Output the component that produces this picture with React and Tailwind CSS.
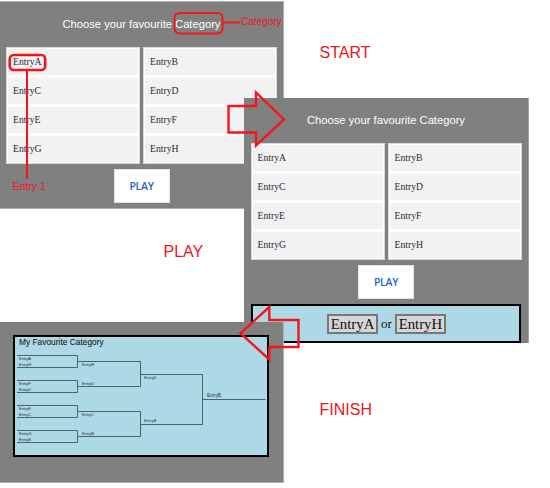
const LEFT = ['EntryA', 'EntryC', 'EntryE', 'EntryG'];
const RIGHT = ['EntryB', 'EntryD', 'EntryF', 'EntryH'];

function Column({ entries }) {
  return (
    <div className="flex h-[117px] w-[134px] flex-col gap-[3px] border border-[#d9d9d9] bg-white p-px">
      {entries.map((name) => (
        <div
          key={name}
          className="flex h-[26px] items-center bg-[#f2f2f2] pl-[5px] font-['Liberation_Serif',serif] text-[9.7px] leading-[12px] text-[#1c2b38]"
        >
          {name}
        </div>
      ))}
    </div>
  );
}

function Chooser() {
  return (
    <div className="flex flex-col items-center">
      <h1 className="h-[45px] pt-[15px] text-[11.2px] leading-[14px] text-white">
        Choose your favourite Category
      </h1>
      <div className="flex gap-[3px]">
        <Column entries={LEFT} />
        <Column entries={RIGHT} />
      </div>
      <button className="mt-[5px] h-[34px] w-[56px] border border-[#e4e4e4] bg-white font-['Open_Sans',sans-serif] text-[10.5px] font-semibold leading-[14px] tracking-[-0.3px] text-[#1f66bd]">
        PLAY
      </button>
    </div>
  );
}

function Choice({ children }) {
  return (
    <button className="h-[20px] w-[51px] border-2 border-[#777] bg-[#d6d6d6] text-[14.8px] leading-[14px] text-[#111]">
      {children}
    </button>
  );
}

const FIRST = [
  ['EntryA', 'EntryH'],
  ['EntryF', 'EntryD'],
  ['EntryE', 'EntryC'],
  ['EntryG', 'EntryB'],
];

function Bracket() {
  return (
    <svg viewBox="15 349 252 106" className="block h-[106px] w-[252px]" fontFamily="Liberation Sans, sans-serif" fontSize="4" fill="#1d3038">
      <g fill="none" stroke="#4b646d" strokeWidth="1">
        {[355.5, 380.5, 405.5, 430.5].map((y) => (
          <path key={y} d={`M17 ${y}H77.5V${y + 12}H17M77.5 ${y + 6}H140.5`} />
        ))}
        <path d="M140.5 361V386.5M140.5 411V437M140.5 374.5H203M140.5 424.5H203M202.5 374V425M203 399.5H265.5" />
      </g>
      {FIRST.map(([a, b], i) => (
        <g key={a}>
          <text x="19" y={359.7 + i * 25}>{a}</text>
          <text x="19" y={365.8 + i * 25}>{b}</text>
        </g>
      ))}
      <text x="82" y="366">EntryH</text>
      <text x="82" y="385">EntryD</text>
      <text x="82" y="416">EntryC</text>
      <text x="82" y="435">EntryB</text>
      <text x="144.3" y="378.5">EntryD</text>
      <text x="144.3" y="422.3">EntryB</text>
      <text x="207" y="397" fontSize="4.6">EntryB</text>
    </svg>
  );
}

function Note({ className, children }) {
  return <span className={`absolute whitespace-nowrap text-[#ed1420] ${className}`}>{children}</span>;
}

export default function App() {
  return (
    <main className="relative h-[488px] w-[550px] overflow-hidden bg-white font-['Liberation_Sans',Arial,sans-serif]">
      <section className="absolute left-0 top-[1px] h-[208px] w-[284px] border-y border-r border-[#b0b0b0] bg-[#808080]">
        <Chooser />
      </section>

      <section className="absolute left-[244px] top-[98px] flex h-[245px] w-[285px] flex-col gap-[5px] border-r border-[#a5a5a5] bg-[#808080]">
        <Chooser />
        <div className="flex h-[39px] w-[270px] shrink-0 items-center justify-center gap-[3px] self-center border-2 border-black bg-[#add8e6] pl-px font-['Liberation_Serif',serif] text-[13px] text-[#111]">
          <Choice>EntryA</Choice>
          <span>or</span>
          <Choice>EntryH</Choice>
        </div>
      </section>

      <section className="absolute left-0 top-[322px] h-[161px] w-[284px] border-b border-r border-[#b0b0b0] bg-[#808080] pl-[13px] pt-[13px]">
        <div className="h-[122px] w-[256px] border-2 border-black bg-[#add8e6]">
          <h2 className="h-[12px] pl-[4px] text-[8.4px] leading-[11px] text-[#0b0b0b]">My Favourite Category</h2>
          <Bracket />
        </div>
      </section>

      <svg viewBox="0 0 550 488" className="absolute inset-0 h-[488px] w-[550px]" fill="none" stroke="#f5141e" strokeWidth="2">
        <rect x="174.5" y="13" width="48" height="20.5" rx="5" />
        <path d="M223 22.5H240" />
        <rect x="9.7" y="55" width="35.5" height="15" rx="4" strokeWidth="2.6" />
        <path d="M27 70V179" />
        <path d="M228.5 106H256V92.5L284 119.5L256 145.5V132.5H228.5Z" strokeWidth="2.4" />
        <path d="M298.5 320H269.3V307L240.5 333.3L269.3 359.5V347H298.5Z" strokeWidth="2.4" />
      </svg>

      <Note className="left-[241px] top-[16px] text-[10px] leading-[12px]">Category</Note>
      <Note className="left-[12.5px] top-[180px] text-[10.5px] leading-[12px]">Entry 1</Note>
      <Note className="left-[319.5px] top-[43px] text-[16px] leading-[20px]">START</Note>
      <Note className="left-[163.5px] top-[242px] text-[16px] leading-[20px]">PLAY</Note>
      <Note className="left-[319.5px] top-[400px] text-[16px] leading-[20px]">FINISH</Note>
    </main>
  );
}
